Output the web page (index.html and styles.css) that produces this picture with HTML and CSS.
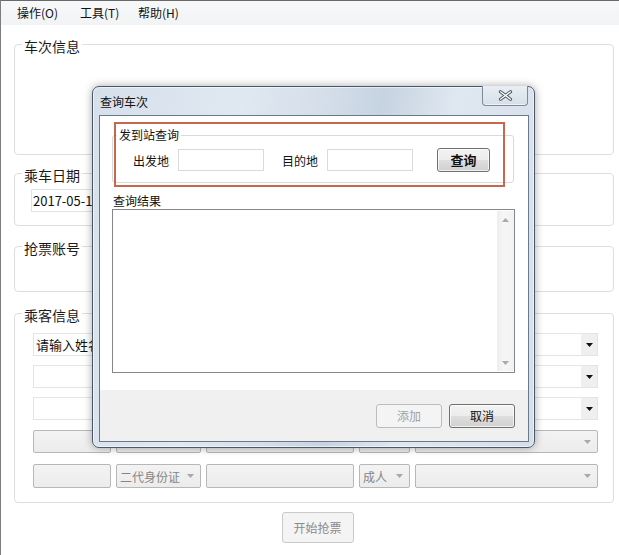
FILE: index.html
```html
<!DOCTYPE html>
<html lang="zh-CN">
<head>
<meta charset="utf-8">
<title>抢票</title>
<link rel="stylesheet" href="styles.css">
</head>
<body>
<div class="app">
  <div class="menubar">
    <span class="menu-item m1">操作(O)</span>
    <span class="menu-item m2">工具(T)</span>
    <span class="menu-item">帮助(H)</span>
  </div>
  <div class="main">
    <div class="group g1"><div class="legend">车次信息</div></div>
    <div class="group g2">
      <div class="legend">乘车日期</div>
      <div class="date">2017-05-18</div>
    </div>
    <div class="group g3"><div class="legend">抢票账号</div></div>
    <div class="group g4">
      <div class="legend">乘客信息</div>
      <div class="combo r1"><span class="ph">请输入姓名</span><span class="arrowbox"><svg width="7" height="4" viewBox="0 0 7 4"><path d="M0 0H7L3.5 4Z" fill="#111"/></svg></span></div>
      <div class="combo r2"><span></span><span class="arrowbox"><svg width="7" height="4" viewBox="0 0 7 4"><path d="M0 0H7L3.5 4Z" fill="#111"/></svg></span></div>
      <div class="combo r3"><span></span><span class="arrowbox"><svg width="7" height="4" viewBox="0 0 7 4"><path d="M0 0H7L3.5 4Z" fill="#111"/></svg></span></div>
      <div class="drow r4">
        <div class="dbox w1"></div>
        <div class="dbox w2 dd"><span></span><svg width="7" height="4" viewBox="0 0 7 4"><path d="M0 0H7L3.5 4Z" fill="#a8a8a8"/></svg></div>
        <div class="dbox w3"></div>
        <div class="dbox w4 dd"><span></span><svg width="7" height="4" viewBox="0 0 7 4"><path d="M0 0H7L3.5 4Z" fill="#a8a8a8"/></svg></div>
        <div class="dbox w5 dd"><span></span><svg width="7" height="4" viewBox="0 0 7 4"><path d="M0 0H7L3.5 4Z" fill="#a8a8a8"/></svg></div>
      </div>
      <div class="drow r5">
        <div class="dbox w1"></div>
        <div class="dbox w2 dd"><span>二代身份证</span><svg width="7" height="4" viewBox="0 0 7 4"><path d="M0 0H7L3.5 4Z" fill="#a8a8a8"/></svg></div>
        <div class="dbox w3"></div>
        <div class="dbox w4 dd"><span>成人</span><svg width="7" height="4" viewBox="0 0 7 4"><path d="M0 0H7L3.5 4Z" fill="#a8a8a8"/></svg></div>
        <div class="dbox w5 dd"><span></span><svg width="7" height="4" viewBox="0 0 7 4"><path d="M0 0H7L3.5 4Z" fill="#a8a8a8"/></svg></div>
      </div>
    </div>
    <div class="start-wrap"><div class="start-btn">开始抢票</div></div>
  </div>

  <div class="dialog">
    <div class="titlebar">查询车次</div>
    <div class="closebtn">
      <svg width="15" height="11" viewBox="0 0 15 11">
        <path d="M2.5 1.8L12.5 9.2M12.5 1.8L2.5 9.2" stroke="#4d5866" stroke-width="3.2" stroke-linecap="round"/>
        <path d="M2.5 1.8L12.5 9.2M12.5 1.8L2.5 9.2" stroke="#ffffff" stroke-width="1.3" stroke-linecap="round"/>
      </svg>
    </div>
    <div class="client">
      <div class="qgroup">
        <div class="qlegend">发到站查询</div>
        <div class="qrow">
          <span class="qlabel">出发地</span>
          <div class="tb"></div>
          <span class="qlabel l2">目的地</span>
          <div class="tb"></div>
          <div class="btn bold qbtn">查询</div>
        </div>
      </div>
      <div class="rlabel">查询结果</div>
      <div class="listbox">
        <div class="vscroll">
          <svg width="7" height="4" viewBox="0 0 7 4"><path d="M0 4H7L3.5 0Z" fill="#a9a9a9"/></svg>
          <svg width="7" height="4" viewBox="0 0 7 4"><path d="M0 0H7L3.5 4Z" fill="#a9a9a9"/></svg>
        </div>
      </div>
      <div class="footer">
        <div class="btn disabled">添加</div>
        <div class="btn">取消</div>
      </div>
    </div>
    <div class="highlight"></div>
  </div>
</div>
</body>
</html>
```

FILE: styles.css
```css
* { box-sizing: border-box; }
html, body { margin: 0; padding: 0; background: #fff; }
body {
  font-family: "Noto Sans CJK SC", "Noto Sans", sans-serif;
  font-size: 12px;
  color: #111;
}
.app {
  position: relative;
  width: 619px;
  height: 555px;
  overflow: hidden;
  border-left: 1px solid #7d7d7d;
  background: #fff;
}
.menubar {
  height: 25px;
  border-top: 1px solid #6a6a6a;
  background: linear-gradient(#f7f8f9, #f1f3f4);
  display: flex;
  padding-left: 16px;
  line-height: 23px;
  font-size: 12px;
  color: #111;
}
.menu-item { display: block; }
.m1 { width: 63px; }
.m2 { width: 58px; }

.main {
  padding-left: 13px;
}
.group {
  width: 600px;
  border: 1px solid #dedede;
  border-radius: 4px;
  background: #fff;
}
.g1 { margin-top: 19px; height: 111px; }
.g2 { margin-top: 18px; height: 53px; }
.g3 { margin-top: 20px; height: 46px; }
.g4 { margin-top: 21px; height: 190px; padding: 0 15px 0 18px; }
.legend {
  width: max-content;
  margin: -7px 0 0 7px;
  padding: 0 2px;
  background: #fff;
  font-size: 14px;
  line-height: 16px;
  color: #1b1b1b;
}
.g4 .legend { margin-left: -11px; }
.date {
  margin: 6px 0 0 16px;
  width: 130px;
  height: 23px;
  border: 1px solid #e2e2e2;
  padding-left: 1px;
  font-size: 13px;
  line-height: 21px;
  color: #111;
}
.combo {
  height: 23px;
  border: 1px solid #e4e4e4;
  display: flex;
  justify-content: space-between;
  align-items: stretch;
}
.r1 { margin-top: 10px; }
.r2 { margin-top: 9px; }
.r3 { margin-top: 9px; }
.ph { padding-left: 2px; font-size: 13px; line-height: 21px; color: #111; }
.arrowbox {
  width: 16px;
  background: #efefef;
  display: flex;
  align-items: center;
  justify-content: center;
}
.drow { display: flex; gap: 5px; height: 23px; }
.r4 { margin-top: 10px; }
.r5 { margin-top: 11px; height: 24px; }
.dbox {
  height: 100%;
  border: 1px solid #b7b7b7;
  border-radius: 2px;
  background: linear-gradient(#f3f3f3, #ececec);
}
.w1 { width: 78px; }
.w2 { width: 85px; }
.w3 { width: 148px; }
.w4 { width: 51px; }
.w5 { width: 183px; }
.dd {
  display: flex;
  align-items: center;
  justify-content: space-between;
  padding: 0 6px 0 3px;
  color: #858585;
  font-size: 12px;
}
.start-wrap {
  display: flex;
  justify-content: center;
  width: 600px;
  padding-left: 7px;
  margin-top: 9px;
}
.start-btn {
  width: 72px;
  height: 31px;
  border: 1px solid #c9c9c9;
  border-radius: 3px;
  background: #f4f4f4;
  color: #8a8a8a;
  font-size: 12px;
  line-height: 29px;
  text-align: center;
}

/* dialog window */
.dialog {
  position: absolute;
  left: 91px;
  top: 86px;
  width: 443px;
  height: 362px;
  border: 1px solid #4c5866;
  border-radius: 7px;
  background: linear-gradient(100deg, #d6e0eb 0%, #e0e8f1 30%, #d3dde9 48%, #c6d3e1 58%, #dfe7f0 72%, #d5dfea 100%);
  box-shadow: 0 0 9px rgba(0,0,0,0.35), inset 0 0 0 1px rgba(255,255,255,0.55);
  display: flex;
  flex-direction: column;
}
.titlebar {
  height: 28px;
  padding-left: 7px;
  line-height: 29px;
  font-size: 12px;
  color: #111;
}
.closebtn {
  position: absolute;
  left: 389px;
  top: -1px;
  width: 46px;
  height: 20px;
  border: 1px solid #7c8a9a;
  border-top: none;
  border-radius: 0 0 4px 4px;
  background: linear-gradient(#e8eef4, #d6dfe9);
  box-shadow: inset 0 -1px 0 rgba(255,255,255,0.6);
  display: flex;
  align-items: center;
  justify-content: center;
}
.client {
  flex: 1;
  margin: 0 5px 5px 6px;
  border: 1px solid #6a7887;
  background: #fff;
  display: flex;
  flex-direction: column;
}
.qgroup {
  margin: 19px 14px 0 12px;
  height: 48px;
  border: 1px solid #d9d9d9;
  border-radius: 3px;
}
.qlegend {
  width: max-content;
  margin: -8px 0 0 4px;
  padding: 0 2px;
  background: #fff;
  font-size: 12px;
  line-height: 14px;
}
.qrow {
  display: flex;
  align-items: center;
  height: 24px;
  margin-top: 6px;
  padding-left: 20px;
}
.qlabel { font-size: 12px; }
.l2 { margin-left: 18px; }
.tb {
  width: 86px;
  height: 22px;
  margin-left: 9px;
  border: 1px solid #dadada;
  background: #fff;
}
.btn {
  width: 66px;
  height: 24px;
  border: 1px solid #707070;
  border-radius: 3px;
  background: linear-gradient(#f3f3f3 0%, #ececec 48%, #dedede 52%, #d0d0d0 100%);
  box-shadow: inset 0 0 0 1px rgba(255,255,255,0.7);
  text-align: center;
  font-size: 12px;
  line-height: 22px;
  color: #111;
}
.qbtn { width: 53px; margin-left: 24px; }
.bold { font-weight: bold; font-size: 13px; }
.btn.disabled {
  border-color: #b9bdc0;
  background: #f4f4f4;
  box-shadow: none;
  color: #a2a2a2;
}
.rlabel {
  margin: 11px 0 0 13px;
  font-size: 12px;
  line-height: 14px;
}
.listbox {
  margin: 1px 0 0 12px;
  width: 403px;
  height: 164px;
  border: 1px solid #828790;
  display: flex;
  justify-content: flex-end;
  padding: 1px 0;
}
.vscroll {
  width: 17px;
  background: linear-gradient(90deg, #eeeeee, #f6f6f6 40%, #f2f2f2);
  display: flex;
  flex-direction: column;
  justify-content: space-between;
  align-items: center;
  padding: 7px 0 6px;
}
.footer {
  margin-top: auto;
  height: 51px;
  background: #f0f0f0;
  display: flex;
  justify-content: flex-end;
  gap: 7px;
  padding: 14px 13px 0 0;
}
.highlight {
  position: absolute;
  left: 21px;
  top: 35px;
  width: 391px;
  height: 65px;
  border: 2px solid #c8674f;
}
```
